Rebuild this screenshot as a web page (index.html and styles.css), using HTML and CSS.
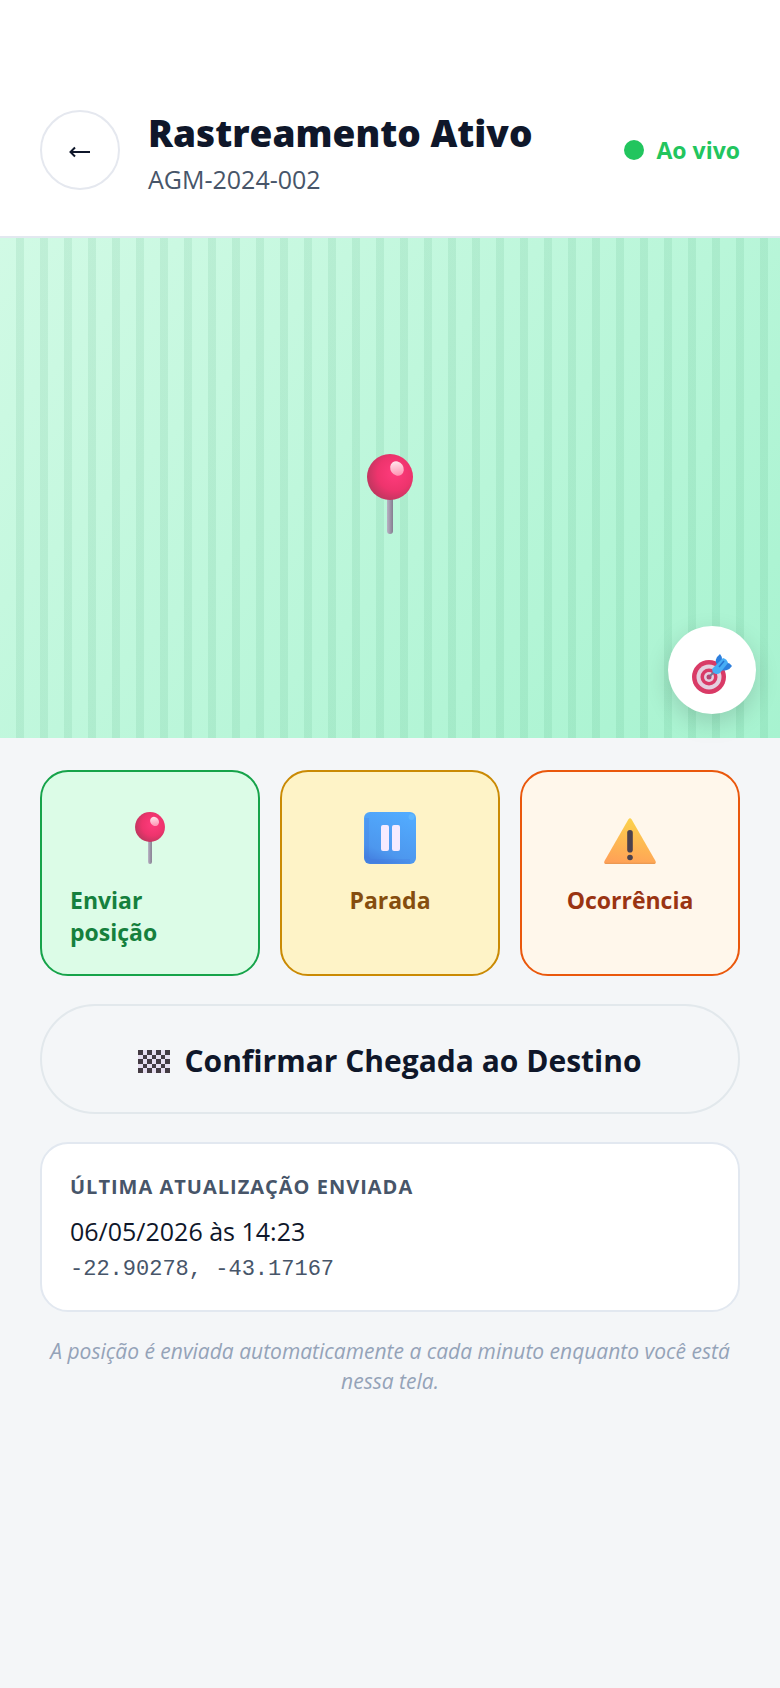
FILE: index.html
```html
<!DOCTYPE html>
<html lang="pt-BR">
<head>
<meta charset="utf-8">
<meta name="viewport" content="width=device-width, initial-scale=1">
<title>Rastreamento Ativo</title>
<link rel="stylesheet" href="styles.css">
</head>
<body>
<svg class="defs" width="0" height="0" aria-hidden="true">
  <defs>
    <radialGradient id="ball" cx="0.6" cy="0.42" r="0.62">
      <stop offset="0" stop-color="#ff3b7c"/>
      <stop offset="0.6" stop-color="#ee346d"/>
      <stop offset="1" stop-color="#c0365f"/>
    </radialGradient>
    <linearGradient id="shine" x1="0.7" y1="0" x2="0.3" y2="1">
      <stop offset="0" stop-color="#ffe9ee"/>
      <stop offset="1" stop-color="#ff8fb0"/>
    </linearGradient>
    <linearGradient id="needle" x1="0" x2="1" y1="0" y2="0">
      <stop offset="0" stop-color="#b9b2c4"/>
      <stop offset="1" stop-color="#857d90"/>
    </linearGradient>
    <linearGradient id="key" x1="0.8" y1="0" x2="0.4" y2="1">
      <stop offset="0" stop-color="#52acff"/>
      <stop offset="0.8" stop-color="#4d97ee"/>
      <stop offset="1" stop-color="#4583e2"/>
    </linearGradient>
    <linearGradient id="warn" x1="0.6" y1="0" x2="0.4" y2="1">
      <stop offset="0" stop-color="#fbd34c"/>
      <stop offset="1" stop-color="#ffa157"/>
    </linearGradient>
    <symbol id="pin" viewBox="0 0 46 80">
      <path d="M20 44h6v33a3 3 0 0 1-6 0z" fill="url(#needle)"/>
      <circle cx="23" cy="23" r="23" fill="url(#ball)"/>
      <ellipse cx="30" cy="14.500" rx="6.500" ry="7.500" fill="url(#shine)" transform="rotate(-35 30 14.500)"/>
    </symbol>
  </defs>
</svg>
<header class="header">
  <button class="back" type="button" aria-label="Voltar">
    <svg width="22" height="12" viewBox="0 0 22 12" fill="none" stroke="#0f172a" stroke-width="2" aria-hidden="true"><path d="M21 6H2M6 1.500L1.500 6L6 10.500"/></svg>
  </button>
  <div class="heading">
    <h1 class="title">Rastreamento Ativo</h1>
    <p class="code">AGM-2024-002</p>
  </div>
  <div class="live"><span class="dot"></span><span>Ao vivo</span></div>
</header>
<section class="map" aria-label="Mapa">
  <svg class="map-pin" width="46" height="80" aria-hidden="true"><use href="#pin"/></svg>
  <button class="locate" type="button" aria-label="Centralizar">
    <svg width="40" height="40" viewBox="0 0 40 40" aria-hidden="true">
      <circle cx="17" cy="23" r="17" fill="#d93a66"/>
      <circle cx="17" cy="23" r="12.500" fill="#e4cfdf"/>
      <circle cx="17" cy="23" r="8.500" fill="#d93a66"/>
      <circle cx="17" cy="23" r="5" fill="#e4cfdf"/>
      <circle cx="17" cy="23" r="2.500" fill="#b64470"/>
      <path d="M18 22l5-5" stroke="#6f7594" stroke-width="2"/>
      <path d="M24 9q-1-3 1-6l3-3q2 2 2 6l-3 6zM29 12l5-3q3-1 6 3-2 3-5 4-4 1-8 0z" fill="#2d7fdd"/>
      <path d="M20 15L31 4q4 1 5 5l-8 10a5 5 0 0 1-8-4z" fill="#47adf5"/>
      <path d="M27 13l5-6" stroke="#2773d0" stroke-width="1.500"/>
    </svg>
  </button>
</section>
<main class="content">
  <div class="actions">
    <button class="action send" type="button">
      <svg width="52" height="52" viewBox="0 0 46 80" aria-hidden="true"><use href="#pin" width="46" height="80"/></svg>
      <span class="label">Enviar posição</span>
    </button>
    <button class="action stop" type="button">
      <svg width="52" height="52" viewBox="0 0 52 52" aria-hidden="true">
        <rect width="52" height="52" rx="6" fill="url(#key)"/>
        <path d="M3 6v39q0 4 4 4h39" fill="none" stroke="#3f74dc" stroke-width="4" opacity="0.2"/>
        <circle cx="47.500" cy="5" r="3" fill="#6bc2ff" opacity="0.5"/>
        <rect x="17" y="13" width="8" height="26" rx="2" fill="#f6ebff"/>
        <rect x="28" y="13" width="8" height="26" rx="2" fill="#f6ebff"/>
      </svg>
      <span class="label">Parada</span>
    </button>
    <button class="action issue" type="button">
      <svg width="52" height="52" viewBox="0 0 52 52" aria-hidden="true">
        <path d="M24.300 7.500q1.700-2.500 3.400 0L51.500 49q1 3-1.500 3H2q-2.500 0-1.500-3z" fill="url(#warn)"/>
        <path d="M1 51.300h50" stroke="#d9914f" stroke-width="1" opacity="0.6"/>
        <rect x="23.200" y="18" width="5.600" height="22.500" rx="2.800" fill="#4b424d"/>
        <circle cx="26" cy="45.500" r="2.800" fill="#4b424d"/>
      </svg>
      <span class="label">Ocorrência</span>
    </button>
  </div>
  <button class="confirm" type="button">
    <svg width="32" height="23" viewBox="0 0 7 5" preserveAspectRatio="none" shape-rendering="crispEdges" aria-hidden="true">
      <rect width="7" height="5" fill="#e6def0"/>
      <path fill="#433b43" d="M0 0h1v1H0zM2 0h1v1H2zM4 0h1v1H4zM6 0h1v1H6zM1 1h1v1H1zM3 1h1v1H3zM5 1h1v1H5zM0 2h1v1H0zM2 2h1v1H2zM4 2h1v1H4zM6 2h1v1H6zM1 3h1v1H1zM3 3h1v1H3zM5 3h1v1H5zM0 4h1v1H0zM2 4h1v1H2zM4 4h1v1H4zM6 4h1v1H6z"/>
    </svg>
    <span>Confirmar Chegada ao Destino</span>
  </button>
  <section class="update">
    <h2 class="caption">ÚLTIMA ATUALIZAÇÃO ENVIADA</h2>
    <p class="time">06/05/2026 às 14:23</p>
    <p class="coords">-22.90278, -43.17167</p>
  </section>
  <p class="note">A posição é enviada automaticamente a cada minuto enquanto você está nessa tela.</p>
</main>
</body>
</html>
```
FILE: styles.css
```css
* { box-sizing: border-box; }
body {
  margin: 0;
  min-height: 100vh;
  background: #f4f6f8;
  color: #0f172a;
  font-family: "Segoe UI", "Open Sans", "Noto Sans", sans-serif;
}
h1, h2, p { margin: 0; }
button { font-family: inherit; color: inherit; cursor: pointer; }
svg { display: block; flex: none; }
.defs { position: absolute; }
.header {
  display: flex;
  align-items: center;
  gap: 28px;
  padding: 100px 40px 36px;
  background: #fff;
  border-bottom: 2px solid #e2e8f0;
}
.back {
  display: flex;
  align-items: center;
  justify-content: center;
  width: 80px;
  height: 80px;
  padding: 4px 0 0;
  border: 2px solid #e5e8ef;
  border-radius: 50%;
  background: #fff;
}
.heading { flex: 1; padding: 6px 0 2px; }
.title { font-size: 37px; line-height: 54px; font-weight: 800; }
.code { font-size: 25px; line-height: 38px; color: #475569; }
.live {
  display: flex;
  align-items: center;
  gap: 12px;
  color: #22c55e;
  font-size: 23px;
  line-height: 32px;
  font-weight: 700;
}
.dot { width: 20px; height: 20px; border-radius: 50%; background: #22c55e; }
.map {
  position: relative;
  display: flex;
  align-items: center;
  justify-content: center;
  height: 500px;
  padding-top: 12px;
  background:
    repeating-linear-gradient(90deg, transparent 0 16px, rgba(22, 130, 74, 0.09) 16px 24px),
    linear-gradient(135deg, #d1fae5, #a7f3d0);
}
.locate {
  position: absolute;
  right: 24px;
  bottom: 24px;
  display: flex;
  align-items: center;
  justify-content: center;
  width: 88px;
  height: 88px;
  padding: 8px 0 0;
  border: 0;
  border-radius: 50%;
  background: #fff;
  box-shadow: 0 8px 24px rgba(0, 0, 0, 0.15);
}
.content {
  display: flex;
  flex-direction: column;
  gap: 28px;
  padding: 32px 40px;
}
.actions { display: grid; grid-template-columns: repeat(3, 1fr); gap: 20px; }
.action {
  display: flex;
  flex-direction: column;
  align-items: center;
  gap: 20px;
  padding: 40px 28px 26px;
  border: 2px solid;
  border-radius: 28px;
  font-size: 23px;
  line-height: 32px;
  font-weight: 700;
  text-align: left;
}
.send { background: #dcfce7; border-color: #16a34a; }
.send .label { color: #15803d; }
.stop { background: #fef3c7; border-color: #ca8a04; }
.stop .label { color: #854d0e; }
.issue { background: #fff7eb; border-color: #ea580c; }
.issue .label { color: #9a3412; }
.confirm {
  display: flex;
  align-items: center;
  justify-content: center;
  gap: 14px;
  min-height: 110px;
  padding: 4px 28px 0;
  border: 2px solid #e2e8ec;
  border-radius: 55px;
  background: transparent;
  font-size: 30px;
  line-height: 40px;
  font-weight: 700;
}
.update {
  padding: 28px 28px 22px;
  border: 2px solid #e2e8f0;
  border-radius: 28px;
  background: #fff;
}
.caption {
  margin-bottom: 8px;
  color: #475569;
  font-size: 20px;
  line-height: 30px;
  font-weight: 700;
  letter-spacing: 1px;
}
.time { font-size: 25px; line-height: 42px; font-weight: 500; }
.coords {
  color: #475569;
  font-family: Consolas, "Liberation Mono", monospace;
  font-size: 22px;
  line-height: 36px;
}
.note {
  margin-top: -4px;
  color: #94a3b8;
  font-size: 21px;
  line-height: 30px;
  font-style: italic;
  text-align: center;
}
```
